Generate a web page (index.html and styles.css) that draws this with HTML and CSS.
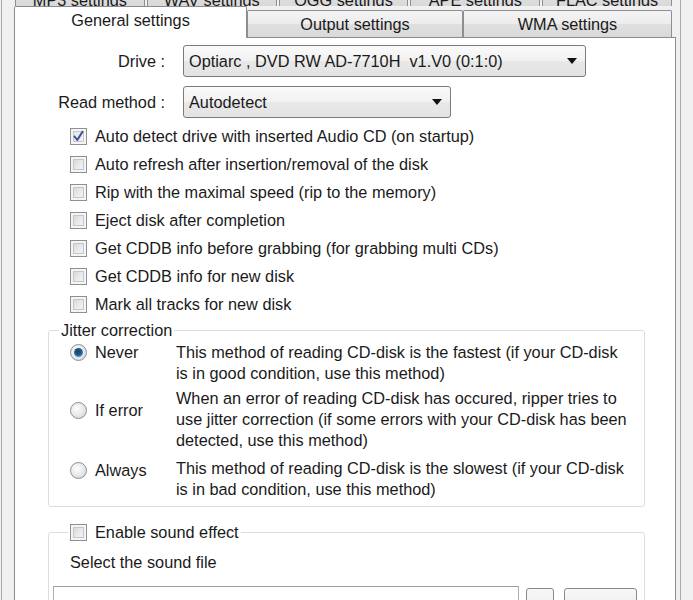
FILE: index.html
```html
<!DOCTYPE html>
<html>
<head>
<meta charset="utf-8">
<title>General settings</title>
<link rel="stylesheet" href="styles.css">
</head>
<body>
<div class="window">
  <div class="edge-left"></div>
  <div class="main">
    <div class="tabs-back">
      <div class="tab">MP3 settings</div>
      <div class="tab">WAV settings</div>
      <div class="tab">OGG settings</div>
      <div class="tab">APE settings</div>
      <div class="tab">FLAC settings</div>
    </div>
    <div class="tabs-front">
      <div class="tab active">General settings</div>
      <div class="tab output">Output settings</div>
      <div class="tab wma">WMA settings</div>
    </div>
    <div class="panel">
      <div class="form-grid">
        <div class="label">Drive :</div>
        <div class="combo wide"><span>Optiarc , DVD RW AD-7710H&nbsp; v1.V0 (0:1:0)</span><span class="arrow"></span></div>
        <div class="label">Read method :</div>
        <div class="combo narrow"><span>Autodetect</span><span class="arrow"></span></div>
      </div>
      <ul class="checks">
        <li><span class="cb checked"><svg viewBox="0 0 17 17" width="17" height="17"><path d="M4.5 8.5 L7.3 12 L12.5 3.8" fill="none" stroke="#3a4f8f" stroke-width="2" stroke-linecap="round" stroke-linejoin="round"/></svg></span>Auto detect drive with inserted Audio CD (on startup)</li>
        <li><span class="cb"></span>Auto refresh after insertion/removal of the disk</li>
        <li><span class="cb"></span>Rip with the maximal speed (rip to the memory)</li>
        <li><span class="cb"></span>Eject disk after completion</li>
        <li><span class="cb"></span>Get CDDB info before grabbing (for grabbing multi CDs)</li>
        <li><span class="cb"></span>Get CDDB info for new disk</li>
        <li><span class="cb"></span>Mark all tracks for new disk</li>
      </ul>
      <fieldset class="group jitter">
        <legend>Jitter correction</legend>
        <div class="jrow">
          <div class="rlabel"><span class="radio on"></span>Never</div>
          <div class="desc">This method of reading CD-disk is the fastest (if your CD-disk<br>is in good condition, use this method)</div>
        </div>
        <div class="jrow mid">
          <div class="rlabel"><span class="radio"></span>If error</div>
          <div class="desc">When an error of reading CD-disk has occured, ripper tries to<br>use jitter correction (if some errors with your CD-disk has been<br>detected, use this method)</div>
        </div>
        <div class="jrow last">
          <div class="rlabel"><span class="radio"></span>Always</div>
          <div class="desc">This method of reading CD-disk is the slowest (if your CD-disk<br>is in bad condition, use this method)</div>
        </div>
      </fieldset>
      <fieldset class="group sound">
        <legend><span class="cb"></span>Enable sound effect</legend>
        <div class="sound-label">Select the sound file</div>
        <div class="file-row">
          <div class="input"></div>
          <div class="btn small">...</div>
          <div class="btn play">Play</div>
        </div>
      </fieldset>
    </div>
  </div>
  <div class="edge-right"></div>
</div>
</body>
</html>
```
FILE: styles.css
```css
* { box-sizing: border-box; }
html, body { margin: 0; padding: 0; }
body {
  font-family: "Liberation Sans", Arial, sans-serif;
  font-size: 16.3px;
  color: #1a1a1a;
  background: #f0f0f0;
}
.window {
  display: flex;
  width: 693px;
  height: 600px;
  overflow: hidden;
  background: #f0f0f0;
}
.edge-left {
  flex: none;
  width: 13px;
  margin-left: 1px;
  border-left: 1px solid #a9a9a9;
}
.main {
  flex: none;
  width: 662px;
  display: flex;
  flex-direction: column;
}
.edge-right {
  flex: 1;
  margin-left: 4px;
  border-left: 1px solid #a9a9a9;
}

/* tabs */
.tab {
  border: 1px solid #8c8e94;
  border-bottom: none;
  border-radius: 2px 2px 0 0;
  background: linear-gradient(#f4f4f4, #ececec 50%, #e0e0e0 51%, #d9d9d9);
  text-align: center;
  white-space: nowrap;
  overflow: hidden;
  line-height: 20px;
}
.tabs-back {
  flex: none;
  display: flex;
  gap: 2px;
  height: 28px;
  margin: -22px 4px 0 1px;
}
.tabs-back .tab {
  flex: 1;
  height: 28px;
  padding-top: 11px;
}
.tabs-front {
  flex: none;
  display: flex;
  align-items: flex-end;
  height: 31px;
  position: relative;
  z-index: 1;
}
.tabs-front .tab {
  height: 27px;
  padding-top: 3px;
}
.tabs-front .tab.active {
  width: 233px;
  height: 32px;
  margin-bottom: -1px;
  padding-top: 3px;
  background: #fff;
  border-color: #898c95;
}
.tabs-front .tab.output { width: 216px; }
.tabs-front .tab.wma { width: 209px; }

/* panel */
.panel {
  flex: none;
  height: 640px;
  background: #fff;
  border: 1px solid #898c95;
}
.form-grid {
  display: grid;
  grid-template-columns: 150px auto;
  column-gap: 18px;
  row-gap: 9px;
  justify-content: start;
  justify-items: start;
  margin-top: 7px;
}
.form-grid .label {
  justify-self: end;
  align-self: center;
  text-align: right;
}
.combo {
  display: flex;
  align-items: center;
  justify-content: space-between;
  height: 32px;
  padding: 0 8px 0 5px;
  border: 1px solid #7a7a7a;
  border-radius: 3px;
  background: linear-gradient(#fafafa, #f1f1f1 50%, #e8e8e8 51%, #e3e3e3);
  white-space: nowrap;
}
.combo.wide { width: 403px; }
.combo.narrow { width: 268px; }
.arrow {
  width: 0;
  height: 0;
  border-left: 5px solid transparent;
  border-right: 5px solid transparent;
  border-top: 6px solid #111;
}

/* checkboxes */
.checks {
  list-style: none;
  margin: 4px 0 0;
  padding: 0 0 0 55px;
}
.checks li {
  display: flex;
  align-items: center;
  gap: 8px;
  height: 28px;
  white-space: nowrap;
}
.cb {
  flex: none;
  display: inline-block;
  width: 17px;
  height: 17px;
  border: 1px solid #8e8f8f;
  background: linear-gradient(135deg, #cdd0d4, #eceded 60%, #f7f7f7);
  box-shadow: inset 0 0 0 2px #f5f5f5, inset 0 0 0 3px #c3c6ca;
  position: relative;
}
.cb.checked {
  background: linear-gradient(135deg, #dfe3ea, #f4f5f7);
}
.cb svg {
  position: absolute;
  left: -1px;
  top: -1px;
}

/* group boxes */
.group {
  width: 597px;
  min-width: 0;
  margin: 0 0 0 33px;
  border: 1px solid #d5dfe5;
  border-radius: 3px;
}
.group legend {
  padding: 0 2px;
  line-height: 20px;
}
.jitter {
  margin-top: 2px;
  padding: 2px 0 6px 10px;
}
.jrow {
  display: flex;
  align-items: flex-start;
}
.jrow + .jrow { margin-top: 4px; }
.jrow.last { margin-top: 7px; }
.rlabel {
  flex: none;
  display: flex;
  align-items: center;
  gap: 8px;
  width: 106px;
  height: 21px;
  margin-left: 11px;
}
.jrow.mid .rlabel { margin-top: 12px; }
.jrow.last .rlabel { margin-top: 2px; }
.desc {
  line-height: 21px;
  white-space: nowrap;
}
.radio {
  flex: none;
  width: 17px;
  height: 17px;
  border: 1px solid #8e8f8f;
  border-radius: 50%;
  background: radial-gradient(circle at 40% 38%, #fdfdfd, #e6e7e8 55%, #c9cbcd);
  display: flex;
  align-items: center;
  justify-content: center;
}
.radio.on::after {
  content: "";
  width: 9px;
  height: 9px;
  border-radius: 50%;
  background: radial-gradient(circle at 45% 40%, #1b3d66 0, #24598c 45%, #5c9fd4 80%, #a7d3f1 100%);
}

.sound {
  margin-top: 15px;
  padding: 0 0 10px 4px;
}
.sound legend {
  margin-left: 15px;
  display: flex;
  align-items: center;
  gap: 8px;
}
.sound-label {
  margin: 10px 0 0 17px;
  line-height: 21px;
}
.file-row {
  display: flex;
  align-items: flex-start;
  margin-top: 13px;
}
.input {
  width: 466px;
  height: 30px;
  border: 1px solid #abadb3;
  border-top-color: #9a9da5;
  background: #fff;
}
.btn {
  height: 30px;
  margin-top: 2px;
  border: 1px solid #8a8a8a;
  border-radius: 3px;
  background: linear-gradient(#f7f7f7, #f0f0f0 50%, #e3e3e3 51%, #dadada);
  text-align: center;
  line-height: 28px;
  color: #1c1c1c;
}
.btn.small { width: 28px; margin-left: 7px; }
.btn.play { width: 73px; margin-left: 10px; padding-top: 4px; }
```
